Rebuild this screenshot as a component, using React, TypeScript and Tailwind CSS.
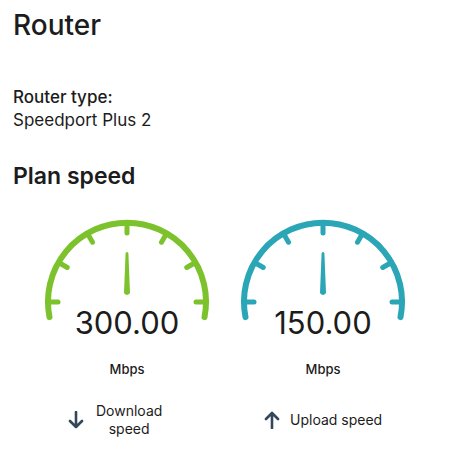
import { FC } from "react";

const Gauge: FC<{ value: string; color: string }> = ({ value, color }) => {
  const cx = 90;
  const cy = 82;
  const r = 79;
  const ticks = [0, 30, 60, 90, 120, 150, 180];
  return (
    <div className="flex flex-col items-center w-[196px]">
      <svg
        width="180"
        height="96"
        viewBox="0 0 180 96"
        className="overflow-visible"
        fill="none"
      >
        <path
          d="M 12.5 97.1 A 79 79 0 1 1 167.5 97.1"
          stroke={color}
          strokeWidth="6"
          strokeLinecap="round"
        />
        {ticks.map((a) => {
          const rad = (a * Math.PI) / 180;
          return (
            <line
              key={a}
              x1={cx + r * Math.cos(rad)}
              y1={cy - r * Math.sin(rad)}
              x2={cx + (r - 10) * Math.cos(rad)}
              y2={cy - (r - 10) * Math.sin(rad)}
              stroke={color}
              strokeWidth="5"
              strokeLinecap="round"
            />
          );
        })}
        <path
          d="M 88.6 33 Q 90 31 91.4 33 L 93 73 Q 90 77 87 73 Z"
          fill={color}
        />
      </svg>
      <div className="text-[31px] leading-[31px] text-[#1c1c1c] mt-[-9px]">
        {value}
      </div>
      <div className="text-[13px] font-medium text-[#1c1c1c] mt-[22px]">
        Mbps
      </div>
    </div>
  );
};

const App: FC = () => {
  return (
    <div
      className="w-[450px] h-[450px] bg-white px-[13px] pt-[8px] text-[#1c1c1c]"
      style={{ fontFamily: "Inter, 'Noto Sans', sans-serif" }}
    >
      <h1 className="text-[28px] font-medium leading-[34px]">Router</h1>
      <div className="mt-[44px] text-[17px] leading-[23px]">
        <div className="font-medium">Router type:</div>
        <div>Speedport Plus 2</div>
      </div>
      <h2 className="mt-[30px] text-[23px] font-semibold leading-[28px]">
        Plan speed
      </h2>
      <div className="flex ml-[16px] mt-[30px]">
        <Gauge value="300.00" color="#7cc22c" />
        <Gauge value="150.00" color="#2aa6b6" />
      </div>
      <div className="flex ml-[16px] mt-[22px] text-[14px] leading-[18px]">
        <div className="w-[196px] flex items-center pl-[39px] gap-[12px]">
          <svg width="16" height="18" viewBox="0 0 16 18" fill="none">
            <path
              d="M8 1 V16 M2 10 L8 16 L14 10"
              stroke="#33475b"
              strokeWidth="2.6"
              strokeLinecap="round"
              strokeLinejoin="round"
            />
          </svg>
          <div className="text-center">
            Download
            <br />
            speed
          </div>
        </div>
        <div className="w-[196px] flex items-center pl-[39px] gap-[10px]">
          <svg width="16" height="18" viewBox="0 0 16 18" fill="none">
            <path
              d="M8 17 V2 M2 8 L8 2 L14 8"
              stroke="#33475b"
              strokeWidth="2.6"
              strokeLinecap="round"
              strokeLinejoin="round"
            />
          </svg>
          <div>Upload speed</div>
        </div>
      </div>
    </div>
  );
};

export default App;
